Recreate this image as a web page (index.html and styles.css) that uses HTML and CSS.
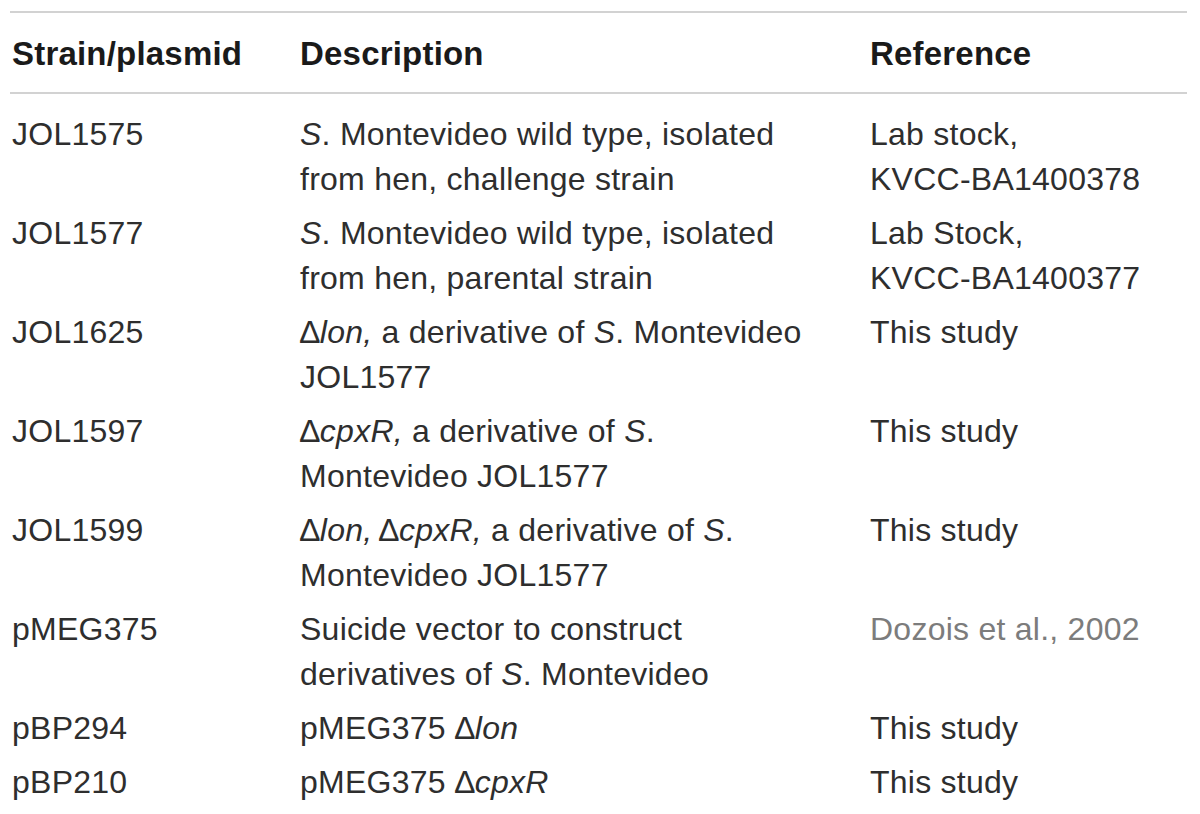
FILE: index.html
```html
<!DOCTYPE html>
<html>
<head>
<meta charset="utf-8">
<link rel="stylesheet" href="styles.css">
</head>
<body>
<table class="strains">
  <colgroup>
    <col class="c1"><col class="c2"><col class="c3">
  </colgroup>
  <thead>
    <tr><th>Strain/plasmid</th><th>Description</th><th>Reference</th></tr>
  </thead>
  <tbody>
    <tr>
      <td>JOL1575</td>
      <td><i>S</i>. Montevideo wild type, isolated<br>from hen, challenge strain</td>
      <td>Lab stock,<br>KVCC-BA1400378</td>
    </tr>
    <tr>
      <td>JOL1577</td>
      <td><i>S</i>. Montevideo wild type, isolated<br>from hen, parental strain</td>
      <td>Lab Stock,<br>KVCC-BA1400377</td>
    </tr>
    <tr>
      <td>JOL1625</td>
      <td>&#8710;<i>lon,</i> a derivative of <i>S</i>. Montevideo<br>JOL1577</td>
      <td>This study</td>
    </tr>
    <tr>
      <td>JOL1597</td>
      <td>&#8710;<i>cpxR,</i> a derivative of <i>S</i>.<br>Montevideo JOL1577</td>
      <td>This study</td>
    </tr>
    <tr>
      <td>JOL1599</td>
      <td>&#8710;<i>lon,</i>&#8201;&#8710;<i>cpxR,</i> a derivative of <i>S</i>.<br>Montevideo JOL1577</td>
      <td>This study</td>
    </tr>
    <tr>
      <td>pMEG375</td>
      <td>Suicide vector to construct<br>derivatives of <i>S</i>. Montevideo</td>
      <td><span class="cite">Dozois et al., 2002</span></td>
    </tr>
    <tr>
      <td>pBP294</td>
      <td>pMEG375 &#8710;<i>lon</i></td>
      <td>This study</td>
    </tr>
    <tr>
      <td>pBP210</td>
      <td>pMEG375 &#8710;<i>cpxR</i></td>
      <td>This study</td>
    </tr>
  </tbody>
</table>
</body>
</html>
```
FILE: styles.css
```css
html, body {
  margin: 0;
  padding: 0;
  background: #ffffff;
}

body {
  font-family: "Liberation Sans", Arial, Helvetica, sans-serif;
  color: #2b2b2b;
}

.strains {
  margin: 11px 0 0 10px;
  width: 1177px;
  border-collapse: collapse;
  table-layout: fixed;
}

.c1 { width: 288px; }
.c2 { width: 570px; }
.c3 { width: 319px; }

.strains th,
.strains td {
  text-align: left;
  vertical-align: top;
  padding: 4px 0 5px 2px;
  line-height: 45px;
}

.strains thead th {
  font-size: 33px;
  font-weight: bold;
  letter-spacing: 0.2px;
  color: #1a1a1a;
  border-top: 2px solid #d2d2d2;
  border-bottom: 2px solid #d2d2d2;
  padding-top: 18px;
  padding-bottom: 16px;
}

.strains tbody td {
  font-size: 32px;
  font-weight: normal;
  letter-spacing: 0.25px;
  color: #2e2e2e;
  white-space: nowrap;
}

.strains tbody tr:first-child td {
  padding-top: 18px;
}

.strains i {
  font-style: italic;
}

.cite {
  color: #7c7c7c;
}
```
